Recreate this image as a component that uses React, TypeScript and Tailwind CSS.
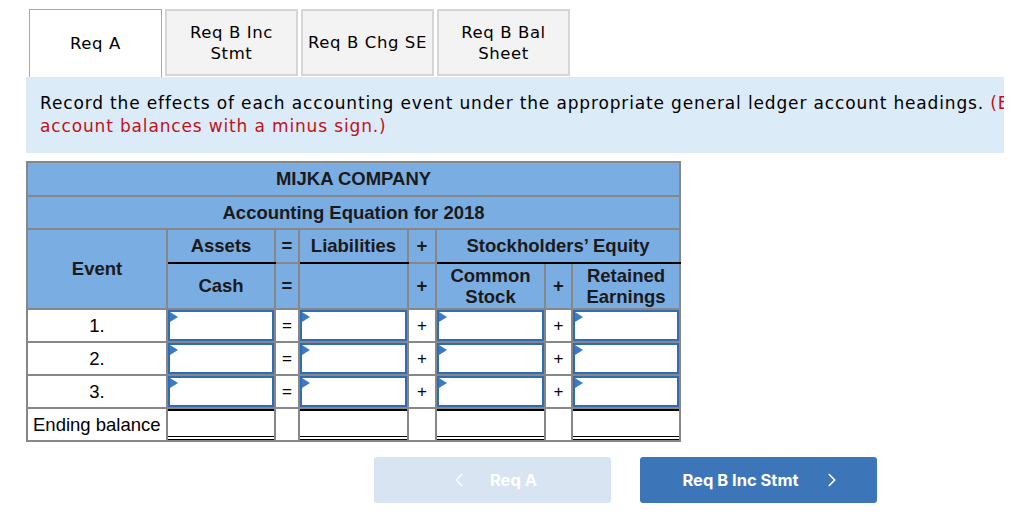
import { ChevronLeft, ChevronRight } from 'lucide-react';

const tabs = [
  { label: 'Req A', active: true },
  { label: 'Req B Inc\nStmt', active: false },
  { label: 'Req B Chg SE', active: false },
  { label: 'Req B Bal\nSheet', active: false },
];

function Tab({ label, active }: { label: string; active: boolean }) {
  return (
    <div
      className={
        active
          ? 'flex h-[68px] w-[133px] items-center justify-center whitespace-pre-line border border-b-0 border-[#a9a9a9] bg-white text-center text-[16.5px] leading-[21px] tracking-[0.6px] text-black'
          : 'flex h-[67px] w-[133px] items-center justify-center whitespace-pre-line border-2 border-[#d6d6d6] bg-[#f3f3f3] text-center text-[16.5px] leading-[21px] tracking-[0.6px] text-black'
      }
    >
      {label}
    </div>
  );
}

function InputCell() {
  return (
    <td className="border-2 border-[#878787] p-0">
      <div className="relative h-[31px] border-2 border-[#2f6cb4] bg-white">
        <span className="absolute left-0 top-0 h-0 w-0 border-y-[5px] border-l-[8px] border-y-transparent border-l-[#3b7ac6]" />
      </div>
    </td>
  );
}

function OpCell({ op }: { op: string }) {
  return <td className="border-2 border-[#878787] bg-white text-center text-[17px] text-black">{op}</td>;
}

function TotalCell() {
  return (
    <td className="border-2 border-[#878787] p-0">
      <div className="h-[31px] border-t-2 border-b-4 border-double border-t-black border-b-black bg-white" />
    </td>
  );
}

const head = 'border-2 border-[#878787] bg-[#7aade2] text-center font-bold text-[18.5px] text-[#1a1a1a]';

export default function App() {
  return (
    <div className="relative h-[524px] w-[1024px] overflow-hidden bg-white" style={{ fontFamily: '"DejaVu Sans", Verdana, sans-serif' }}>
      <div className="flex gap-[3px] pl-[29px] pt-[9px]">
        {tabs.map((t) => (
          <Tab key={t.label} label={t.label} active={t.active} />
        ))}
      </div>

      {/* the band is wider than the view in the original, so its text runs past the right edge */}
      <div className="ml-[26px] w-[978px] overflow-hidden bg-[#dcebf8]">
        <div className="w-[1200px] whitespace-nowrap pb-[15px] pl-[14px] pt-[15px] text-[17px] leading-[23px] tracking-[0.85px] text-black">
          Record the effects of each accounting event under the appropriate general ledger account headings.{' '}
          <span className="text-[#c0121b]">(Enter any decreases to</span>
          <br />
          <span className="text-[#c0121b]">account balances with a minus sign.)</span>
        </div>
      </div>

      <div className="ml-[26px] mt-[8px]" style={{ fontFamily: '"Liberation Sans", Arial, sans-serif' }}>
        <table className="w-[653px] table-fixed border-collapse">
          <colgroup>
            <col className="w-[140px]" />
            <col className="w-[108px]" />
            <col className="w-[24px]" />
            <col className="w-[109px]" />
            <col className="w-[28px]" />
            <col className="w-[109px]" />
            <col className="w-[27px]" />
            <col className="w-[108px]" />
          </colgroup>
          <tbody>
            <tr className="h-[34px]">
              <td colSpan={8} className={head}>MIJKA COMPANY</td>
            </tr>
            <tr className="h-[33px]">
              <td colSpan={8} className={head}>Accounting Equation for 2018</td>
            </tr>
            <tr className="h-[34px]">
              <td rowSpan={2} className={head}>Event</td>
              <td className={`${head} border-b-black`}>Assets</td>
              <td className={head}>=</td>
              <td className={`${head} border-b-black`}>Liabilities</td>
              <td className={head}>+</td>
              <td colSpan={3} className={`${head} border-b-black`}>Stockholders’ Equity</td>
            </tr>
            <tr className="h-[46px]">
              <td className={`${head} border-t-black`}>Cash</td>
              <td className={head}>=</td>
              <td className={`${head} border-t-black`}></td>
              <td className={head}>+</td>
              <td className={`${head} border-t-black leading-[21px]`}>
                Common
                <br />
                Stock
              </td>
              <td className={`${head} border-t-black`}>+</td>
              <td className={`${head} border-t-black leading-[21px]`}>
                Retained
                <br />
                Earnings
              </td>
            </tr>
            {['1.', '2.', '3.'].map((n) => (
              <tr key={n} className="h-[33px]">
                <td className="border-2 border-[#878787] bg-white text-center text-[18.5px] text-black">{n}</td>
                <InputCell />
                <OpCell op="=" />
                <InputCell />
                <OpCell op="+" />
                <InputCell />
                <OpCell op="+" />
                <InputCell />
              </tr>
            ))}
            <tr className="h-[33px]">
              <td className="whitespace-nowrap border-2 border-[#878787] bg-white pl-[5px] text-left text-[18.5px] text-black">Ending balance</td>
              <TotalCell />
              <OpCell op="" />
              <TotalCell />
              <OpCell op="" />
              <TotalCell />
              <OpCell op="" />
              <TotalCell />
            </tr>
          </tbody>
        </table>
      </div>

      <div className="ml-[374px] mt-[15px] flex gap-[29px]" style={{ fontFamily: 'Inter, "Liberation Sans", sans-serif' }}>
        <button className="flex h-[46px] w-[237px] items-center justify-center gap-[20px] rounded-[3px] bg-[#d8e4f2] text-[16.5px] font-bold text-white">
          <ChevronLeft className="h-[22px] w-[22px]" strokeWidth={1.75} />
          <span>Req A</span>
        </button>
        <button className="flex h-[46px] w-[237px] items-center justify-center gap-[22px] rounded-[3px] bg-[#3d76b8] pl-[8px] text-[16.5px] font-bold text-white">
          <span>Req B Inc Stmt</span>
          <ChevronRight className="h-[22px] w-[22px]" strokeWidth={1.75} />
        </button>
      </div>
    </div>
  );
}
